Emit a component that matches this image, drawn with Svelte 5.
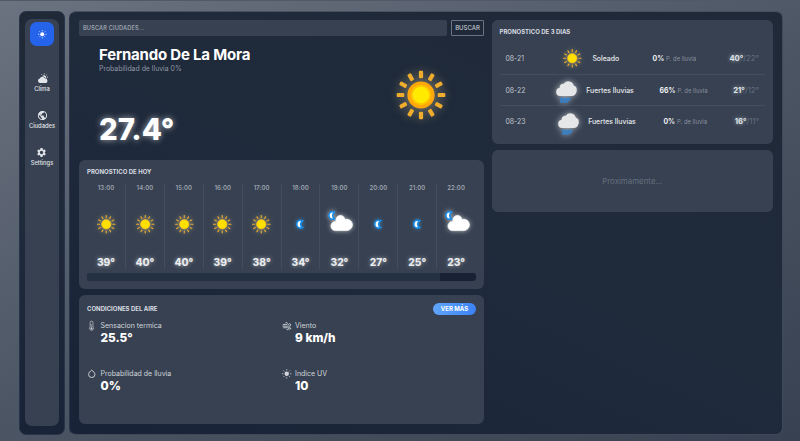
<script>
  const hours = [
    ['13:00', 39, 'sun'], ['14:00', 40, 'sun'], ['15:00', 40, 'sun'], ['16:00', 39, 'sun'], ['17:00', 38, 'sun'],
    ['18:00', 34, 'moon'], ['19:00', 32, 'night'], ['20:00', 27, 'moon'], ['21:00', 25, 'moon'], ['22:00', 23, 'night']
  ];
  const days = [
    ['08-21', 'sun', 'Soleado', 0, 40, 22],
    ['08-22', 'rain', 'Fuertes lluvias', 66, 21, 12],
    ['08-23', 'rain', 'Fuertes lluvias', 0, 16, 11]
  ];
  const air = [
    ['thermo', 'Sensacion termica', '25.5°'], ['wind', 'Viento', '9 km/h'],
    ['drop', 'Probabilidad de lluvia', '0%'], ['uv', 'Indice UV', '10']
  ];
  const nav = [['clima', 'Clima'], ['globe', 'Ciudades'], ['gear', 'Settings']];
  const rays = Array.from({ length: 12 }, (_, i) => i * 30);
  const cloud = 'm47.7 35.4c0-4.6-3.7-8.2-8.2-8.2-1 0-1.9.2-2.8.5-.3-3.4-3.1-6.2-6.6-6.2-3.7 0-6.7 3-6.7 6.7 0 .8.2 1.6.4 2.3-.3-.1-.7-.1-1-.1-3.7 0-6.7 3-6.7 6.7 0 3.6 2.9 6.6 6.5 6.7h17.2c4.4-.5 7.9-4 7.9-8.4z';
  const tallCloud = 'M22 44a6.8 6.8 0 0 1-.5-13.5 5.5 5.5 0 0 1 6.5-6.3 9 9 0 0 1 16.3 3.3c3.7.7 5.7 4.8 4.3 9.5-1.2 4.5-3.6 7-8 7z';
  const crescent = 'M14.5 13.2c0-3.7 2-6.9 5-8.7-1.5-.9-3.2-1.3-5-1.3-5.5 0-10 4.5-10 10s4.5 10 10 10c1.8 0 3.5-.5 5-1.3-3-1.7-5-5-5-8.7z';
</script>

{#snippet sun(big)}
  <svg class={big ? 'hero-sun' : 'sun'} viewBox="-25 -25 50 50">
    {#each rays as r}
      {#if big}
        <rect x="-2.1" y="-24.3" width="4.2" height="7.6" rx="1.2" transform="rotate({r})" fill="#f0ad2d" />
      {:else}
        <path d="M0-23.5v5.2" transform="rotate({r})" stroke="#f0ad2d" stroke-width="3" stroke-linecap="round" />
      {/if}
    {/each}
    {#if big}
      <circle r="13.6" fill="#ffa70b" /><circle r="10.2" fill="#ffc400" /><circle r="8.3" fill="#ffea00" />
    {:else}
      <circle r="12.5" fill="#ffe000" stroke="#ffc21c" stroke-width="2" />
    {/if}
  </svg>
{/snippet}

{#snippet weather(kind)}
  {#if kind === 'sun'}
    {@render sun(false)}
  {:else if kind === 'moon'}
    <svg class="moon" viewBox="0 0 28 28"><path d={crescent} fill="#fff" stroke="#168be8" stroke-width="4" /></svg>
  {:else if kind === 'night'}
    <svg class="night" viewBox="0 0 28 24">
      <path d={crescent} transform="translate(2.2 -1.6) scale(.38)" fill="#fff" stroke="#168be8" stroke-width="4" />
      <path d={cloud} transform="translate(-5 -11.2) scale(.68)" fill="#fff" stroke="#fff" stroke-width="1" />
    </svg>
  {:else}
    <svg class="rain" viewBox="0 0 24 24">
      <path d={tallCloud} transform="translate(-7.6 -9.2) scale(.62)" fill="#e5e6e8" />
      <path d="M5.5 20.5h11M6.500 22.200h10M6 23.800h8" stroke="#3480c8" stroke-width="1.7" stroke-dasharray="2.8 .5" />
    </svg>
  {/if}
{/snippet}

{#snippet glyph(kind)}
  <svg class="glyph" viewBox="0 0 24 24" fill="currentColor">
    {#if kind === 'clima'}
      <path d="M7 22a5 5 0 0 1-.8-9.9 5.8 5.8 0 0 1 10.8-.8A5.3 5.3 0 0 1 17.8 22z" />
      <path d="M12.5 6.2a4.7 4.7 0 0 1 7.3 5.5 7 7 0 0 0-2-1.1 7 7 0 0 0-6.3-3.7z" />
      <path d="M15.8 1v2.5M10 3l1.7 1.8M22 3l-1.8 1.8M21.8 9H24" stroke="currentColor" stroke-width="1.7" />
    {:else if kind === 'globe'}
      <path d="M12 2C6.48 2 2 6.48 2 12s4.48 10 10 10 10-4.48 10-10S17.52 2 12 2zm-1 17.93c-3.95-.49-7-3.85-7-7.93 0-.62.08-1.21.21-1.79L9 15v1c0 1.1.9 2 2 2v1.93zm6.9-2.54c-.26-.81-1-1.39-1.9-1.39h-1v-3c0-.55-.45-1-1-1H8v-2h2c.55 0 1-.45 1-1V7h2c1.1 0 2-.9 2-2v-.41c2.93 1.19 5 4.06 5 7.41 0 2.08-.8 3.97-2.1 5.39z" />
    {:else if kind === 'gear'}
      <path d="M19.14 12.94c.04-.3.06-.61.06-.94 0-.32-.02-.64-.07-.94l2.03-1.58c.18-.14.23-.41.12-.61l-1.92-3.32c-.12-.22-.37-.29-.59-.22l-2.39.96c-.5-.38-1.03-.7-1.62-.94l-.36-2.54c-.04-.24-.24-.41-.48-.41h-3.84c-.24 0-.43.17-.47.41l-.36 2.54c-.59.24-1.13.57-1.62.94l-2.39-.96c-.22-.08-.47 0-.59.22L2.74 8.87c-.12.21-.08.47.12.61l2.03 1.58c-.05.3-.09.63-.09.94s.02.64.07.94l-2.03 1.58c-.18.14-.23.41-.12.61l1.92 3.32c.12.22.37.29.59.22l2.39-.96c.5.38 1.03.7 1.62.94l.36 2.54c.05.24.24.41.48.41h3.84c.24 0 .44-.17.47-.41l.36-2.54c.59-.24 1.13-.56 1.62-.94l2.39.96c.22.08.47 0 .59-.22l1.92-3.32c.12-.22.07-.47-.12-.61l-2.01-1.58zM12 15.6a3.6 3.6 0 1 1 0-7.2 3.6 3.6 0 0 1 0 7.2z" />
    {:else if kind === 'thermo'}
      <g fill="none" stroke="currentColor" stroke-width="1.7"><path d="M8 15V3a3.5 2.5 0 0 1 7 0v12a5 5 0 1 1-7 0z" /><path d="M11.5 8v9" stroke-width="1.2" /></g><circle cx="11.5" cy="19" r="2.6" />
    {:else if kind === 'wind'}
      <path d="M2 9h9a2.6 2.6 0 1 0-2.5-3.3M1 13h18a3 3 0 1 0-3-3.6M3 17h11a2.5 2.5 0 1 1-2.3 3.3M16 17h4a2 2 0 1 1-1.8 3" fill="none" stroke="currentColor" stroke-width="2.2" />
    {:else if kind === 'drop'}
      <path d="M12 2.5C8 6 4 9.5 4 14a8 7.5 0 0 0 16 0C20 9.5 16 6 12 2.5z" fill="none" stroke="currentColor" stroke-width="2.4" />
    {:else}
      <circle cx="12" cy="12" r="5.6" />
      <path d="M12 0v3.5M12 20.5V24M0 12h3.5M20.5 12H24M3.8 3.8l2.4 2.4M17.8 17.8l2.4 2.4M3.8 20.2l2.4-2.4M17.8 6.2l2.4-2.4" stroke="currentColor" stroke-width="1.9" />
    {/if}
  </svg>
{/snippet}

<div class="page">
  <aside class="shell side">
    <nav>
      <div class="logo">{@render glyph('uv')}</div>
      {#each nav as [icon, label]}
        <div class="nav-item">{@render glyph(icon)}<span>{label}</span></div>
      {/each}
    </nav>
  </aside>
  <main class="shell">
    <section class="left">
      <div class="search">
        <div class="input">BUSCAR CIUDADES...</div>
        <div class="button">BUSCAR</div>
      </div>
      <div class="hero">
        <div class="city">
          <h1>Fernando De La Mora</h1>
          <p>Probabilidad de lluvia 0%</p>
          <strong>27.4°</strong>
        </div>
        {@render sun(true)}
      </div>
      <div class="card today">
        <h2>PRONOSTICO DE HOY</h2>
        <div class="hours">
          {#each hours as [time, temp, kind]}
            <div class="hour">
              <span>{time}</span>
              <div class="pic">{@render weather(kind)}</div>
              <b>{temp}°</b>
            </div>
          {/each}
        </div>
        <div class="track"><div class="thumb"></div></div>
      </div>
      <div class="card conditions">
        <div class="cond-head"><h2>CONDICIONES DEL AIRE</h2><div class="more">VER MÁS</div></div>
        <div class="air">
          {#each air as [icon, label, value]}
            <div class="metric">
              {@render glyph(icon)}
              <div><span>{label}</span><b>{value}</b></div>
            </div>
          {/each}
        </div>
      </div>
    </section>
    <section class="right">
      <div class="card forecast">
        <h2>PRONOSTICO DE 3 DIAS</h2>
        {#each days as [date, kind, text, prob, max, min]}
          <div class="day">
            <span class="date">{date}</span>
            <div class="state"><div class="state-icon">{@render weather(kind)}</div><span>{text}</span></div>
            <div class="prob"><b>{prob}%</b> <small>P. de lluvia</small></div>
            <div class="range"><b>{max}°</b><span>/{min}°</span></div>
          </div>
        {/each}
      </div>
      <div class="card soon">Proximamente...</div>
    </section>
  </main>
</div>

<style>
  .page {
    box-sizing: border-box; width: 800px; height: 441px; padding: 10px 17px 6px 19px;
    display: flex; gap: 4px; overflow: hidden;
    border-top: 1px solid #515967;
    background: linear-gradient(155deg, #6b7280 0%, #4b5563 52%, #374151 100%);
    font-family: Inter, 'Liberation Sans', sans-serif; color: #fff;
  }
  .page * { box-sizing: border-box; }
  h1, h2, p { margin: 0; }
  svg { display: block; overflow: visible; flex: none; }
  .shell {
    border-radius: 7px; background: linear-gradient(25deg, #192338 0%, #1f2a3b 50%, #1f2937 100%);
    border: 1px solid #3f4959; border-top-color: #465161; border-left-color: #28344a;
  }
  .side { width: 46px; padding: 7px 5px 8px; flex: none; border-color: #28344a; }
  nav {
    height: 100%; border-radius: 7px; background: #374151; padding-top: 3px;
    display: flex; flex-direction: column; align-items: center;
  }
  .logo {
    width: 24px; height: 24px; border-radius: 6.5px; background: #2563eb; margin-bottom: 27px;
    display: grid; place-items: center;
  }
  .logo .glyph { width: 8.5px; height: 8.5px; }
  .nav-item {
    height: 36.8px; display: flex; flex-direction: column; align-items: center;
    font-size: 5.8px; line-height: 7px; color: #e1e4e8; white-space: nowrap; font-weight: 500;
  }
  .nav-item .glyph { width: 11px; height: 11px; margin-bottom: 1px; }
  main { flex: 1; display: flex; gap: 7.5px; padding: 8.4px 9px 8px 9px; }
  .left { width: 405px; display: flex; flex-direction: column; }
  .right { flex: 1; display: flex; flex-direction: column; gap: 6px; }
  .search { height: 16px; display: flex; gap: 4px; font-size: 5.6px; font-weight: 600; }
  .input { flex: 1; background: #374151; border-radius: 2px; padding: 0 4px; line-height: 16px; color: #9ca3af; letter-spacing: .17px; }
  .button { width: 33px; border: 1px solid #6b7482; text-align: center; line-height: 14px; color: #c3c8d0; font-size: 6px; border-radius: 1px; font-weight: 500; }
  .hero { height: 124px; display: flex; justify-content: space-between; padding: 0 38px 0 20px; }
  .city { display: flex; flex-direction: column; }
  h1 { font-size: 15px; line-height: 18px; font-weight: 700; margin-top: 10px; letter-spacing: -.2px; }
  .city p { font-size: 6.9px; line-height: 9px; color: #8f97a5; }
  .city strong { font-size: 29.4px; line-height: 36px; font-weight: 800; margin-top: 39px; text-shadow: 0 0 6px #ffffffa0; }
  .hero-sun { width: 50px; height: 50px; margin-top: 33.6px; filter: drop-shadow(0 0 4px #cbbf9399); }
  .card { background: #374151; border-radius: 6px; }
  h2 { font-size: 6px; line-height: 8px; font-weight: 700; color: #d9dce1; }
  .today { height: 129px; padding: 7.4px 8px 8px; }
  .hours { display: flex; height: 85.6px; margin-top: 8px; }
  .hour {
    flex: 1; display: flex; flex-direction: column; align-items: center; justify-content: space-between;
    border-right: 1px solid #434d5c;
  }
  .hour:last-child { border-right-color: transparent; }
  .hour > span { font-size: 6px; line-height: 8px; font-weight: 600; color: #9ca3af; letter-spacing: .05px; }
  .hour b { font-size: 10.2px; line-height: 13px; font-weight: 800; color: #e9ebee; text-shadow: 0 0 4px #ffffff90; }
  .pic { height: 27px; display: grid; place-items: center; }
  .sun { width: 18.5px; height: 18.5px; filter: drop-shadow(0 0 2.5px #d8cf94b0); }
  .moon { width: 11px; height: 11px; filter: drop-shadow(0 0 2px #4ba6ed99); }
  .night { width: 28px; height: 24px; filter: drop-shadow(0 0 2.5px #ffffffa0); }
  .rain { width: 24px; height: 24px; filter: drop-shadow(0 0 3px #ffffff99); }
  .track { height: 8px; margin-top: 4px; border-radius: 3px; background: #182234; }
  .thumb { width: 353px; height: 8px; border-radius: 3px 0 0 3px; background: #243044; }
  .conditions { height: 129px; margin-top: 6px; padding: 8px; }
  .cond-head { display: flex; justify-content: space-between; height: 12px; align-items: center; }
  .more {
    width: 43px; height: 12px; border-radius: 6px; text-align: center; font-size: 6px; line-height: 12px;
    font-weight: 700; background: linear-gradient(90deg, #60a5fa, #3b82f6);
  }
  .air { display: grid; grid-template-columns: 1fr 1fr; grid-auto-rows: 48px; padding-top: 5.6px; }
  .metric { display: flex; gap: 4px; color: #d1d5db; }
  .metric .glyph { width: 9.5px; height: 9.5px; }
  .metric span { display: block; font-size: 7px; line-height: 10px; }
  .metric b { display: block; font-size: 11.8px; line-height: 15px; font-weight: 800; color: #fff; }
  .forecast { height: 124px; padding: 8px; }
  .day { height: 31.5px; padding: 0 6px; display: flex; align-items: center; justify-content: space-between; font-size: 6.9px; white-space: nowrap; }
  .forecast h2 { height: 14px; }
  .day + .day { border-top: 1px solid #434d5c; }
  .date { color: #c2c7cf; }
  .state { display: flex; align-items: center; gap: 6px; font-weight: 500; color: #e8eaed; }
  .state-icon { width: 29px; height: 24px; display: grid; place-items: center; }
  .prob b { color: #f0f2f4; font-weight: 700; }
  .prob small { font-size: 5.9px; color: #8a92a0; }
  .range { font-size: 7.7px; }
  .range b { color: #dfe2e6; font-weight: 700; text-shadow: 0 0 4px #ffffff90; }
  .range span { color: #667080; }
  .soon { height: 62px; display: grid; place-items: center; font-size: 7.9px; color: #656f7f; }
</style>
